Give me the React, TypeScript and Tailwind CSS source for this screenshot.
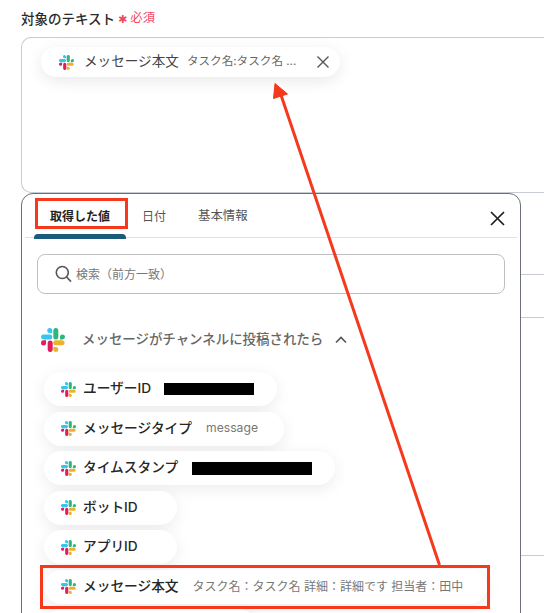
const SlackIcon = ({ size = 15 }: { size?: number }) => (
  <svg width={size} height={size} viewBox="0 0 54 54" className="shrink-0">
    <path fill="#36C5F0" d="M19.7 0a5.6 5.6 0 0 0 0 11.3h5.6V5.6A5.6 5.6 0 0 0 19.7 0zm0 14.4H5.6a5.6 5.6 0 0 0 0 11.3h14.1a5.6 5.6 0 0 0 0-11.3z" />
    <path fill="#2EB67D" d="M54 20a5.6 5.6 0 0 0-11.3 0v5.7h5.7A5.6 5.6 0 0 0 54 20zm-15 0V5.6a5.6 5.6 0 0 0-11.3 0V20a5.6 5.6 0 0 0 11.3 0z" />
    <path fill="#ECB22E" d="M33.3 54a5.6 5.6 0 0 0 0-11.3h-5.6v5.7a5.6 5.6 0 0 0 5.6 5.6zm0-15h14.1a5.6 5.6 0 0 0 0-11.3H33.3a5.6 5.6 0 0 0 0 11.3z" />
    <path fill="#E01E5A" d="M0 33.5a5.6 5.6 0 0 0 11.3 0v-5.7H5.6A5.6 5.6 0 0 0 0 33.5zm15 0v14.9a5.6 5.6 0 0 0 11.3 0V33.5a5.6 5.6 0 0 0-11.3 0z" />
  </svg>
);

const Pill = ({
  label,
  width,
  sub,
  bar,
}: {
  label?: string;
  width: string;
  sub?: React.ReactNode;
  bar?: string;
}) => (
  <div
    className={`flex h-[34px] shrink-0 items-center rounded-full bg-white pl-[17px] shadow-[0_4px_16px_rgba(0,0,0,0.08)] ${width}`}
  >
    {label && (
      <>
        <SlackIcon />
        <span className="ml-[7px] whitespace-nowrap text-[13.7px] font-medium leading-none text-[#262626]">{label}</span>
      </>
    )}
    {sub}
    {bar && <span className={`bg-black ${bar}`} />}
  </div>
);

export default function App() {
  return (
    <div
      className="relative h-[613px] w-[544px] overflow-hidden bg-white"
      style={{ fontFamily: "Inter, 'Noto Sans CJK JP', sans-serif" }}
    >
      {/* form underneath */}
      <div className="flex h-[37px] items-start pl-[21px] pt-[9px]">
        <span className="text-[13.5px] font-medium leading-[20px] text-[#2b2b2b]">対象のテキスト</span>
        <span className="ml-[3px] mt-[1px] text-[11px] leading-[20px] text-[#f0485f]" style={{ fontFamily: "'DejaVu Sans', sans-serif" }}>✱</span>
        <span className="ml-[3px] text-[12.3px] leading-[18px] text-[#f0485f]">必須</span>
      </div>
      <div className="ml-[21px] h-[156px] w-[540px] rounded-l-[10px] border border-r-0 border-[#c6cbd6] pl-[19px] pt-[9px]">
        <div className="flex h-[30px] w-[299px] items-center rounded-full bg-white pl-[18px] shadow-[0_4px_16px_rgba(0,0,0,0.09)]">
          <SlackIcon />
          <span className="ml-[10px] whitespace-nowrap text-[13.6px] leading-none text-[#444]">メッセージ本文</span>
          <span className="ml-[8px] whitespace-nowrap text-[11.6px] leading-none text-[#666]">タスク名:タスク名 ...</span>
          <svg width="12" height="12" viewBox="0 0 12 12" className="ml-auto mr-[11px] shrink-0" stroke="#555" strokeWidth="1.4">
            <path d="M0.5 0.5 11.5 11.5M11.5 0.5 0.5 11.5" />
          </svg>
        </div>
      </div>
      <div className="ml-[300px] mt-[81px] h-[43px] border-t border-[#c6cbd6]" />
      <div className="ml-[300px] h-[238px] border-t border-[#c6cbd6]" />
      <div className="ml-[300px] border-t border-[#c6cbd6]" />

      {/* popup panel */}
      <div className="absolute left-[21px] top-[193px] h-[440px] w-[500px] rounded-t-[12px] border border-[#6b6f76] bg-white">
        <div className="mx-[3px] flex h-[44px] items-center border-b border-[#dfe1e5] pr-[12px]">
          <div className="relative ml-[9px] flex h-[44px] w-[92px] items-center justify-center pt-[2px]">
            <span className="text-[12px] font-bold leading-none text-[#222]">取得した値</span>
            <span className="absolute bottom-[-1px] left-0 h-[5px] w-[92px] rounded-t-[4px] bg-[#1b5a7b]" />
          </div>
          <span className="ml-[16px] pt-[2px] text-[12px] leading-none text-[#555]">日付</span>
          <span className="ml-[32px] pt-[2px] text-[12.4px] leading-none text-[#555]">基本情報</span>
          <svg width="15" height="15" viewBox="0 0 15 15" className="ml-auto mt-[5px]" stroke="#1e1e1e" strokeWidth="1.7">
            <path d="M1 1 14 14M14 1 1 14" />
          </svg>
        </div>
        <div className="ml-[15px] mt-[16px] flex h-[40px] w-[468px] items-center rounded-[8px] border border-[#bdbfc3] pl-[17px]">
          <svg width="17" height="18" viewBox="0 0 17 18" fill="none" stroke="#555" strokeWidth="1.6">
            <circle cx="7.3" cy="7.5" r="6" />
            <path d="M11.6 12 16 16.6" />
          </svg>
          <span className="ml-[4px] pt-[1px] text-[12px] leading-none text-[#777]">検索（前方一致）</span>
        </div>
        <div className="ml-[19px] mt-[33px] flex h-[25px] items-center">
          <SlackIcon size={24} />
          <span className="ml-[17px] whitespace-nowrap text-[13.45px] font-medium leading-none text-[#666]">メッセージがチャンネルに投稿されたら</span>
          <svg width="12" height="8" viewBox="0 0 12 8" className="ml-[12px]" fill="none" stroke="#555" strokeWidth="1.6">
            <path d="M1 6.5 6 1.5 11 6.5" />
          </svg>
        </div>
        <div className="ml-[22px] mt-[20px] flex flex-col gap-[5.5px]">
          <Pill label="ユーザーID" width="w-[233px]" bar="ml-[13px] h-[12px] w-[90px]" />
          <Pill
            label="メッセージタイプ"
            width="w-[240px]"
            sub={<span className="ml-[14px] whitespace-nowrap text-[12.2px] leading-none text-[#777]">message</span>}
          />
          <Pill label="タイムスタンプ" width="w-[291px]" bar="ml-[14px] h-[13px] w-[120px]" />
          <Pill label="ボットID" width="w-[133px]" />
          <Pill label="アプリID" width="w-[133px]" />
          <Pill
            label="メッセージ本文"
            width="w-[443px]"
            sub={<span className="ml-[14px] whitespace-nowrap text-[12px] leading-none text-[#777]">タスク名：タスク名 詳細：詳細です 担当者：田中</span>}
          />
          <Pill width="w-[212px]" />
        </div>
      </div>

      {/* annotations */}
      <div className="absolute left-[35px] top-[198px] h-[31px] w-[93px] border-[3px] border-[#f5391c]" />
      <div className="absolute left-[40px] top-[565px] h-[44px] w-[450px] border-[3px] border-[#f5391c]" />
      <svg className="absolute left-0 top-0" width="544" height="613" viewBox="0 0 544 613">
        <path d="M439.5 565 281 95" stroke="#f5391c" strokeWidth="3" fill="none" />
        <path d="M275 83.5 287.5 94 273.5 98.5Z" fill="#f5391c" stroke="#f5391c" strokeWidth="1" />
      </svg>
    </div>
  );
}
